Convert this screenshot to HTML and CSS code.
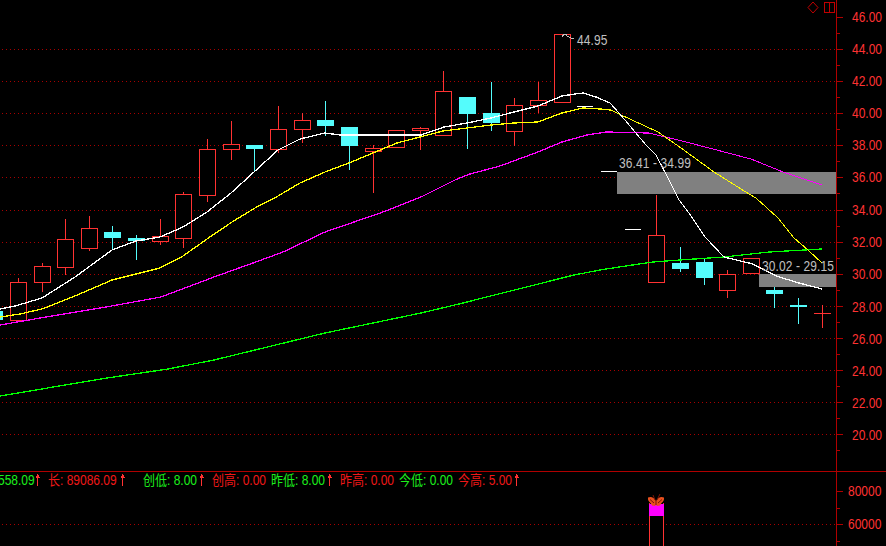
FILE: index.html
```html
<!DOCTYPE html>
<html lang="zh">
<head>
<meta charset="utf-8">
<title>K线图</title>
<link rel="stylesheet" href="styles.css">
</head>
<body>
<svg class="chart" width="886" height="546" viewBox="0 0 886 546" xmlns="http://www.w3.org/2000/svg">
  <defs>
    <path id="arrow" d="M0 -5.5 L2 -1.5 H0.6 V7 H-0.6 V-1.5 H-2 Z"/>
  </defs>

  <g class="grid">
    <path d="M2 49.5H836M2 81.5H836M2 113.5H836M2 145.5H836M2 177.5H836M2 210.5H836M2 242.5H836M2 274.5H836M2 306.5H836M2 338.5H836M2 370.5H836M2 402.5H836M2 434.5H836"/>
    <path d="M2 524.5H648M666 524.5H836"/>
  </g>

  <g class="boxes">
    <rect x="617" y="172" width="219" height="22"/>
    <rect x="759" y="274" width="77" height="13"/>
  </g>

  <g class="red">
    <path d="M18.5 278V320M42.5 263V292M65.5 219V275M89.5 216V251M160.5 219V245M183.5 192V248M207.5 139V202M231.5 121V160M278.5 106V153M302.5 113V143M373.5 145V193M420.5 127V150M443.5 71V136M514.5 98V146M538.5 82V113M656.5 195V283M727.5 270V298M822.5 305V328"/>
    <rect x="10.5" y="282.5" width="16" height="38"/>
    <rect x="34.5" y="266.5" width="16" height="16"/>
    <rect x="57.5" y="239.5" width="16" height="28"/>
    <rect x="81.5" y="228.5" width="16" height="20"/>
    <rect x="152.5" y="236.5" width="16" height="5"/>
    <rect x="175.5" y="194.5" width="16" height="44"/>
    <rect x="199.5" y="149.5" width="16" height="46"/>
    <rect x="223.5" y="144.5" width="16" height="5"/>
    <rect x="270.5" y="129.5" width="16" height="20"/>
    <rect x="294.5" y="120.5" width="16" height="9"/>
    <rect x="365.5" y="148.5" width="16" height="3"/>
    <rect x="388.5" y="130.5" width="16" height="17"/>
    <rect x="412.5" y="128.5" width="16" height="2"/>
    <rect x="435.5" y="91.5" width="16" height="44"/>
    <rect x="506.5" y="105.5" width="16" height="26"/>
    <rect x="530.5" y="100.5" width="16" height="5"/>
    <rect x="554.5" y="34.5" width="16" height="68"/>
    <rect x="648.5" y="235.5" width="16" height="47"/>
    <rect x="719.5" y="274.5" width="16" height="16"/>
    <rect x="743.5" y="258.5" width="16" height="15"/>
    <path d="M814 313.5H831"/>
  </g>

  <g class="cyan">
    <path d="M112.5 226V249M136.5 235V260M254.5 145V171M325.5 101V136M349.5 127V170M467.5 97V149M491.5 82V131M680.5 247V272M704.5 258V285M774.5 287V308M798.5 298V324"/>
    <rect class="fill" x="0" y="311" width="3" height="9"/>
    <rect class="fill" x="104" y="232" width="17" height="6"/>
    <rect class="fill" x="128" y="238" width="17" height="3"/>
    <rect class="fill" x="246" y="145" width="17" height="4"/>
    <rect class="fill" x="317" y="120" width="17" height="6"/>
    <rect class="fill" x="341" y="127" width="17" height="19"/>
    <rect class="fill" x="459" y="97" width="17" height="17"/>
    <rect class="fill" x="483" y="113" width="17" height="10"/>
    <rect class="fill" x="672" y="263" width="17" height="6"/>
    <rect class="fill" x="696" y="262" width="17" height="16"/>
    <rect class="fill" x="766" y="290" width="17" height="4"/>
    <rect class="fill" x="790" y="305" width="17" height="2"/>
  </g>

  <g class="ma">
    <polyline class="ma-green" points="0,396 107,378 168,369 214,360 325,333 421,313 459,304 574,275 600,270 619,267 653,262 680,260 724,257 769,252 822,249"/>
    <polyline class="ma-magenta" points="0,325 46,317 106,307 161,297 214,277 253,263 283,252 325,232 383,212 421,197 455,180 470,174 500,166 538,152 562,142 587,135 606,132 649,133"/>
    <polyline class="ma-magenta thin" points="649,133 686,142 751,159 783,172 822,185"/>
    <polyline class="ma-yellow" points="0,317 20,314 42,309 50,306 82,293 112,280 136,274 160,268 183,256 207,239 232,222 255,208 278,196 300,183 325,172 349,163 373,153 397,143 420,137 443,131 467,128 491,125 514,123 538,122 562,113 583,108 600,109 611,110"/>
    <polyline class="ma-yellow thin" points="611,110 619,114 658,132 681,148 714,172 749,194 756,198 778,218 794,238 808,250 822,263"/>
    <polyline class="ma-white" points="0,309 15,306 42,298 75,277 112,250 136,241 160,237 183,227 207,212 231,193 254,172 278,150 300,139 325,133 340,135 409,135 421,135 444,127 467,123 491,118 514,112 538,106 562,96 575,94 583,93 596,97 610,103"/>
    <polyline class="ma-white thin" points="610,103 619,113 646,145 656,155 669,180 679,200 689,213 705,237 724,257"/>
    <polyline class="ma-white" points="724,257 753,264 776,276 799,283 822,289"/>
  </g>

  <g class="dash">
    <path d="M577 106.5H593M601 171.5H617M625 229.5H641"/>
  </g>

  <g class="label">
    <path class="pointer" d="M562 37L564 34H567M566 35.5L571 38H574"/>
    <text x="577" y="45">44.95</text>
    <text x="619" y="168">36.41 - 34.99</text>
    <text x="762" y="271">30.02 - 29.15</text>
  </g>

  <g class="icons">
    <path d="M813 2L818 7.5L813 13L808 7.5Z"/>
    <rect x="824.5" y="2.5" width="10" height="10"/>
    <path d="M829.5 2.5V12.5"/>
  </g>

  <path class="axis" d="M836.5 0V546M0 471.5H886M836 17.5H843M836 33.5H840M836 49.5H843M836 65.5H840M836 81.5H843M836 97.5H840M836 113.5H843M836 129.5H840M836 145.5H843M836 161.5H840M836 177.5H843M836 193.5H840M836 210.5H843M836 226.5H840M836 242.5H843M836 258.5H840M836 274.5H843M836 290.5H840M836 306.5H843M836 322.5H840M836 338.5H843M836 354.5H840M836 370.5H843M836 386.5H840M836 402.5H843M836 418.5H840M836 434.5H843M836 450.5H840M836 491.5H843M836 508.5H840M836 524.5H843M836 541.5H840"/>

  <g class="scale">
    <text x="852" y="22">46.00</text>
    <text x="852" y="54">44.00</text>
    <text x="852" y="86">42.00</text>
    <text x="852" y="118">40.00</text>
    <text x="852" y="150">38.00</text>
    <text x="852" y="182">36.00</text>
    <text x="852" y="215">34.00</text>
    <text x="852" y="247">32.00</text>
    <text x="852" y="279">30.00</text>
    <text x="852" y="312">28.00</text>
    <text x="852" y="344">26.00</text>
    <text x="852" y="376">24.00</text>
    <text x="852" y="408">22.00</text>
    <text x="852" y="440">20.00</text>
    <text x="848" y="496">80000</text>
    <text x="848" y="529">60000</text>
  </g>

  <g class="legend">
    <text class="up" x="-2" y="485">558.09</text>
    <text class="down" x="48" y="485">长: 89086.09</text>
    <text class="up" x="143" y="485">创低: 8.00</text>
    <text class="down" x="212" y="485">创高: 0.00</text>
    <text class="up" x="271" y="485">昨低: 8.00</text>
    <text class="down" x="340" y="485">昨高: 0.00</text>
    <text class="up" x="399" y="485">今低: 0.00</text>
    <text class="down" x="458" y="485">今高: 5.00</text>
  </g>

  <g class="arrows">
    <use href="#arrow" x="37.5" y="479"/>
    <use href="#arrow" x="122.5" y="479"/>
    <use href="#arrow" x="201.5" y="479"/>
    <use href="#arrow" x="329.5" y="479"/>
    <use href="#arrow" x="516.5" y="479"/>
  </g>

  <g class="volume">
    <path class="vol-edge" d="M649.5 503V546M663.5 503V546"/>
    <rect class="vol-fill" x="649" y="504" width="15" height="12"/>
    <g class="butterfly">
      <path class="wing" d="M648 497.5C651 496 654 497.5 656 501C658 497.5 661 496 664 497.5C664.5 500 663 502 661.5 503L660 505.5L657 506L656 504.5L655 506L652 505.5L650.5 503C649 502 647.5 500 648 497.5Z"/>
      <path class="wing-dark" d="M656 500V505M655 500L653 495M657 500L660 494M650 499.5L654 503M662 499.5L658 503"/>
    </g>
  </g>
</svg>
</body>
</html>
```
FILE: styles.css
```css
html, body {
  margin: 0;
  padding: 0;
  background: #000;
  overflow: hidden;
}

.chart {
  display: block;
  background: #000;
}

.chart path,
.chart rect,
.chart polyline {
  shape-rendering: crispEdges;
}

.grid path {
  fill: none;
  stroke: #a80000;
  stroke-width: 1;
  stroke-dasharray: 1 3;
}

.boxes rect {
  fill: #808080;
}

.red path,
.red rect {
  fill: none;
  stroke: #ff3232;
  stroke-width: 1;
}

.red rect {
  fill: #000;
}

.cyan path {
  fill: none;
  stroke: #54fcfc;
  stroke-width: 1;
}

.cyan .fill {
  fill: #54fcfc;
}

.ma polyline {
  fill: none;
  stroke-width: 1.3;
}

.ma .thin {
  stroke-width: 1;
}

.ma-white { stroke: #fff; }
.ma-yellow { stroke: #ff0; }
.ma-magenta { stroke: #f0f; }
.ma-green { stroke: #0f0; }

.dash path {
  fill: none;
  stroke: #fff;
}

.label text,
.scale text,
.legend text {
  transform-box: fill-box;
  transform-origin: 0 100%;
  transform: scaleY(1.15);
}

.label text {
  font-family: "Liberation Sans", Arial, sans-serif;
  font-size: 12px;
  letter-spacing: 0.1px;
  fill: #c0c0c0;
}

.label .pointer {
  fill: none;
  stroke: #c0c0c0;
}

.icons path,
.icons rect {
  fill: none;
  stroke: #c00000;
}

.icons path:first-child {
  shape-rendering: auto;
}

.axis {
  fill: none;
  stroke: #b00000;
  stroke-width: 1;
}

.scale text {
  font-family: "Liberation Sans", Arial, sans-serif;
  font-size: 12px;
  fill: #ff3232;
}

.legend text {
  font-family: "Liberation Sans", "Noto Sans CJK SC", sans-serif;
  font-size: 12px;
}

.legend .up { fill: #1cf01c; }
.legend .down { fill: #f01818; }

.arrows use {
  fill: #ff3232;
}

.vol-edge {
  fill: none;
  stroke: #ff3232;
}

.vol-fill {
  fill: #ff00ff;
}

.butterfly .wing {
  fill: #e8501e;
  shape-rendering: auto;
}

.butterfly .wing-dark {
  fill: none;
  stroke: #7a1408;
  stroke-width: 1;
  shape-rendering: auto;
}
```
